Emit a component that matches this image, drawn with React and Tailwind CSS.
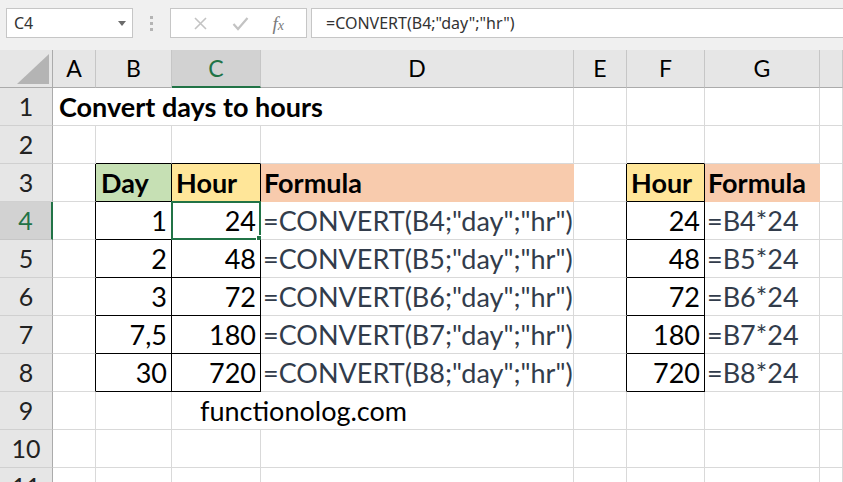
import React from 'react';

const COLS = ['A', 'B', 'C', 'D', 'E', 'F', 'G', 'H'];
const ROWS = [1, 2, 3, 4, 5, 6, 7, 8, 9, 10, 11];

// bordered ranges: B3:C8 and F3:F8 (col index: A=0)
const inTable = (r, c) => r >= 3 && r <= 8 && (c === 1 || c === 2 || c === 5);

const FILLS = {
  '3-1': 'bg-[#c6e0b4]',
  '3-2': 'bg-[#ffe699]',
  '3-3': 'bg-[#f8cbad]',
  '3-5': 'bg-[#ffe699]',
  '3-6': 'bg-[#f8cbad]',
};

const data = [
  { r: 1, c: 0, span: 4, text: 'Convert days to hours', cls: 'font-bold pl-[6px]' },
  { r: 3, c: 1, text: 'Day', cls: 'font-bold pl-[5px]' },
  { r: 3, c: 2, text: 'Hour', cls: 'font-bold pl-[4px]' },
  { r: 3, c: 3, text: 'Formula', cls: 'font-bold pl-[3px]' },
  { r: 3, c: 5, text: 'Hour', cls: 'font-bold pl-[4px]' },
  { r: 3, c: 6, text: 'Formula', cls: 'font-bold pl-[3px]' },
  { r: 9, c: 2, span: 2, text: 'functionolog.com', cls: 'pl-[28px]' },
];

const values = [
  ['1', '24', 'B4', '24'],
  ['2', '48', 'B5', '48'],
  ['3', '72', 'B6', '72'],
  ['7,5', '180', 'B7', '180'],
  ['30', '720', 'B8', '720'],
];
values.forEach(([day, hr, ref, h2], i) => {
  const r = i + 4;
  data.push({ r, c: 1, text: day, cls: 'justify-end pr-[4px]' });
  data.push({ r, c: 2, text: hr, cls: 'justify-end pr-[4px]' });
  data.push({ r, c: 3, text: `=CONVERT(${ref};"day";"hr")`, cls: 'pl-[2px] text-[#323c4b]' });
  data.push({ r, c: 5, text: h2, cls: 'justify-end pr-[4px]' });
  data.push({ r, c: 6, text: `=${ref}*24`, cls: 'pl-[2px] text-[#323c4b]' });
});

function borderCls(r, c) {
  const fill = FILLS[`${r}-${c}`];
  const right = inTable(r, c) || inTable(r, c + 1);
  const bottom = inTable(r, c) || inTable(r + 1, c);
  let cls = '';
  if (right) cls += ' border-r-black';
  else if (fill && (c === 3 || c === 6)) cls += ' border-r-[#f8cbad]';
  else cls += ' border-r-[#d9d9d9]';
  if (bottom) cls += ' border-b-black';
  else if (fill && (c === 3 || c === 6)) cls += ' border-b-[#f8cbad]';
  else cls += ' border-b-[#d9d9d9]';
  return cls;
}

function Row({ r }) {
  const cells = [];
  let c = 0;
  while (c < COLS.length) {
    const d = data.find((x) => x.r === r && x.c === c);
    const span = d?.span || 1;
    const last = c + span - 1;
    const fill = FILLS[`${r}-${c}`] || 'bg-white';
    const selected = r === 4 && c === 2;
    cells.push(
      <div
        key={c}
        className={`relative flex items-end pb-[0px] leading-[36px] border-r border-b whitespace-nowrap overflow-visible ${fill} ${borderCls(r, last)} ${d?.cls || ''}`}
        style={span > 1 ? { gridColumn: `span ${span} / span ${span}` } : undefined}
      >
        {d?.text}
        {selected && (
          <div className="absolute -left-px -top-px -right-px -bottom-px border-2 border-[#217346] pointer-events-none">
            <div className="absolute -right-[4px] -bottom-[4px] w-[6px] h-[6px] bg-[#217346] outline outline-1 outline-white" />
          </div>
        )}
      </div>
    );
    c += span;
  }
  const sel = r === 4;
  return (
    <>
      <div
        className={`flex items-center justify-center border-b text-[25px] ${
          sel
            ? 'bg-[#d2d2d2] text-[#217346] border-r-2 border-r-[#217346] border-b-[#c6c6c6]'
            : 'bg-[#e6e6e6] text-[#222] border-r border-r-[#ababab] border-b-[#d0d0d0]'
        }`}
      >
        {r}
      </div>
      {cells}
    </>
  );
}

function FormulaBar() {
  return (
    <div className="h-[50px] bg-[#f0f0f0] flex items-start pt-[8px] pl-[6px] gap-0 font-['Noto_Sans',sans-serif] text-[16px] text-[#333]">
      <div className="w-[127px] h-[30px] bg-white border border-[#c6c6c6] flex items-center justify-between pl-[7px] pr-[6px]">
        <span>C4</span>
        <svg width="8" height="5" viewBox="0 0 8 5"><path d="M0 0h8L4 5z" fill="#6b6b6b" /></svg>
      </div>
      <div className="w-[37px] h-[30px] flex flex-col items-center justify-center gap-[3px]">
        <span className="w-[3px] h-[3px] bg-[#b4b4b4]" />
        <span className="w-[3px] h-[3px] bg-[#b4b4b4]" />
        <span className="w-[3px] h-[3px] bg-[#b4b4b4]" />
      </div>
      <div className="w-[137px] h-[30px] bg-white border border-[#c6c6c6] flex items-center justify-around px-[10px]">
        <svg width="15" height="15" viewBox="0 0 15 15"><path d="M2 2l11 11M13 2L2 13" stroke="#c3c3c3" strokeWidth="1.6" /></svg>
        <svg width="17" height="15" viewBox="0 0 17 15"><path d="M1.5 8l4.5 5L15.5 2" stroke="#c3c3c3" strokeWidth="2.2" fill="none" /></svg>
        <span className="font-['Liberation_Serif',serif] italic text-[19px] text-[#7a7a7a] leading-none">
          f<span className="text-[14px]">x</span>
        </span>
      </div>
      <div className="ml-[4px] flex-1 h-[30px] bg-white border border-[#c6c6c6] border-r-0 flex items-center pl-[14px]">
        =CONVERT(B4;"day";"hr")
      </div>
    </div>
  );
}

export default function App() {
  return (
    <div className="w-[843px] h-[482px] overflow-hidden bg-white font-['Lato',sans-serif]">
      <FormulaBar />
      <div className="grid grid-cols-[53px_43px_76px_89px_313px_53px_78px_115px_1fr] auto-rows-[38px] text-[27px] text-black">
        <div className="bg-[#e6e6e6] border-r border-r-[#ababab] border-b border-b-[#ababab] flex items-end justify-end pr-[3px] pb-[3px]">
          <svg width="32" height="30" viewBox="0 0 32 30"><path d="M32 0V30H0z" fill="#b4b4b4" /></svg>
        </div>
        {COLS.map((col) => (
          <div
            key={col}
            className={`flex items-center justify-center text-[23px] border-r border-r-[#c6c6c6] ${
              col === 'C'
                ? 'bg-[#d2d2d2] text-[#217346] border-b-2 border-b-[#217346]'
                : 'bg-[#e6e6e6] text-black border-b border-b-[#ababab]'
            }`}
          >
            {col === 'H' ? '' : col}
          </div>
        ))}
        {ROWS.map((r) => (
          <Row key={r} r={r} />
        ))}
      </div>
    </div>
  );
}
